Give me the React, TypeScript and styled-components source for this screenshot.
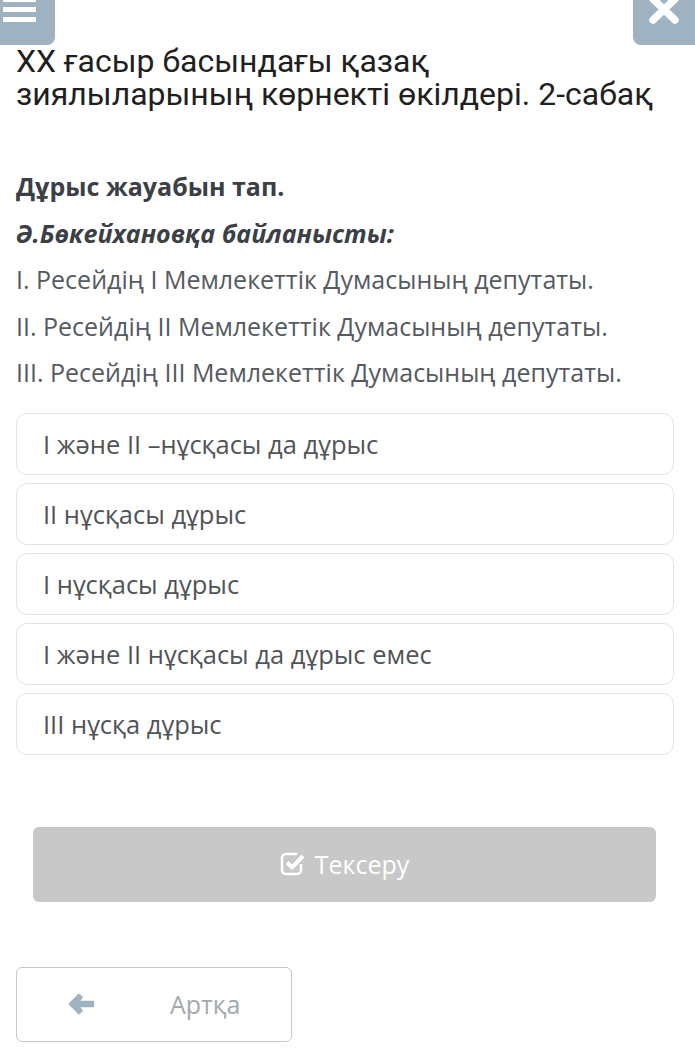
import React from 'react';
import styled, {createGlobalStyle} from 'styled-components';

const GlobalStyle = createGlobalStyle`
    html, body {
        margin: 0;
        padding: 0;
        background: #ffffff;
    }
    body {
        font-family: 'Open Sans', sans-serif;
    }
`;

const Page = styled.div`
    width: 695px;
    height: 1060px;
    overflow: hidden;
    background: #ffffff;
    display: flex;
    flex-direction: column;
`;

const TopBar = styled.div`
    display: flex;
    justify-content: space-between;
    height: 45px;
`;

const CornerButton = styled.div<{side: 'left' | 'right'}>`
    width: ${p => p.side === 'left' ? '55px' : '62px'};
    height: 45px;
    background: #9fb2c2;
    border-radius: ${p => p.side === 'left' ? '0 0 8px 0' : '0 0 0 8px'};
    display: flex;
    align-items: flex-start;
    justify-content: ${p => p.side === 'left' ? 'flex-start' : 'center'};
    padding-left: ${p => p.side === 'left' ? '3px' : '0'};
    box-sizing: border-box;
`;

const Title = styled.h1`
    margin: 0;
    padding: 0 16px;
    font-family: Roboto, sans-serif;
    font-weight: 400;
    font-size: 32px;
    line-height: 33px;
    color: #1f1f1f;
    white-space: pre;
`;

const Body = styled.div`
    padding: 52px 16px 0 16px;
    display: flex;
    flex-direction: column;
`;

const Question = styled.div`
    font-family: 'Open Sans', sans-serif;
    font-weight: 700;
    font-size: 25px;
    line-height: 46.5px;
    color: #3b4046;
`;

const Subject = styled(Question)`
    font-style: italic;
`;

const Statement = styled.div`
    font-family: 'Open Sans', sans-serif;
    font-size: 25px;
    line-height: 46.5px;
    color: #555a5f;
`;

const Options = styled.div`
    display: flex;
    flex-direction: column;
    gap: 8px;
    margin-top: 17px;
    margin-right: 5px;
`;

const Option = styled.div`
    height: 62px;
    box-sizing: border-box;
    border: 1.5px solid #e3e3e3;
    border-radius: 11px;
    display: flex;
    align-items: center;
    padding-left: 26px;
    font-family: 'Open Sans', sans-serif;
    font-size: 25.5px;
    color: #505458;
`;

const CheckButton = styled.div`
    margin: 72px 39px 0 33px;
    height: 75px;
    flex-shrink: 0;
    background: #c8c8c8;
    border-radius: 6px;
    display: flex;
    align-items: center;
    justify-content: center;
    gap: 9px;
    color: #ffffff;
    font-family: 'Open Sans', sans-serif;
    font-size: 25px;
`;

const BackButton = styled.div`
    margin: 65px 0 0 16px;
    width: 276px;
    height: 75px;
    flex-shrink: 0;
    box-sizing: border-box;
    border: 1.5px solid #c4c8cc;
    border-radius: 6px;
    display: flex;
    align-items: center;
    padding-left: 51px;
    gap: 75px;
    color: #a3a8ad;
    font-family: 'Open Sans', sans-serif;
    font-size: 25px;
`;

const Hamburger = () => (
    <svg width="34" height="24" viewBox="0 0 34 24">
        <rect x="0" y="0" width="33" height="2" fill="#ffffff"/>
        <rect x="0" y="7" width="33" height="5" fill="#ffffff"/>
        <rect x="0" y="17" width="33" height="5" fill="#ffffff"/>
    </svg>
);

const CloseIcon = () => (
    <svg width="36" height="26" viewBox="0 0 36 26">
        <path d="M7 -1 L29 20 M29 -1 L7 20" stroke="#ffffff" strokeWidth="7.5" strokeLinecap="round"/>
    </svg>
);

const CheckIcon = () => (
    <svg width="26" height="26" viewBox="0 0 26 26">
        <path d="M21 13 V19 a4 4 0 0 1 -4 4 H6 a4 4 0 0 1 -4 -4 V7 a4 4 0 0 1 4 -4 H17" fill="none" stroke="#ffffff" strokeWidth="2.5"/>
        <path d="M7 11.5 L12 16.5 L23 5" fill="none" stroke="#ffffff" strokeWidth="4" strokeLinejoin="round"/>
    </svg>
);

const ArrowIcon = () => (
    <svg width="27" height="22" viewBox="0 0 27 22">
        <path d="M2 11 L11 2 L13.5 4.5 L9 9 H25 V13 H9 L13.5 17.5 L11 20 Z" fill="#9fb2c2" stroke="#9fb2c2" strokeWidth="2.5" strokeLinejoin="round"/>
    </svg>
);

const options = [
    'I және II –нұсқасы да дұрыс',
    'II нұсқасы дұрыс',
    'I нұсқасы дұрыс',
    'I және II нұсқасы да дұрыс емес',
    'III нұсқа дұрыс',
];

export default function App() {
    return (
        <Page>
            <GlobalStyle/>
            <TopBar>
                <CornerButton side="left"><Hamburger/></CornerButton>
                <CornerButton side="right"><CloseIcon/></CornerButton>
            </TopBar>
            <Title>{'ХХ ғасыр басындағы қазақ\nзиялыларының көрнекті өкілдері. 2-сабақ'}</Title>
            <Body>
                <Question>Дұрыс жауабын тап.</Question>
                <Subject>Ә.Бөкейхановқа байланысты:</Subject>
                <Statement>I. Ресейдің I Мемлекеттік Думасының депутаты.</Statement>
                <Statement>II. Ресейдің II Мемлекеттік Думасының депутаты.</Statement>
                <Statement>III. Ресейдің III Мемлекеттік Думасының депутаты.</Statement>
                <Options>
                    {options.map(o => <Option key={o}>{o}</Option>)}
                </Options>
            </Body>
            <CheckButton><CheckIcon/>Тексеру</CheckButton>
            <BackButton><ArrowIcon/>Артқа</BackButton>
        </Page>
    );
}
